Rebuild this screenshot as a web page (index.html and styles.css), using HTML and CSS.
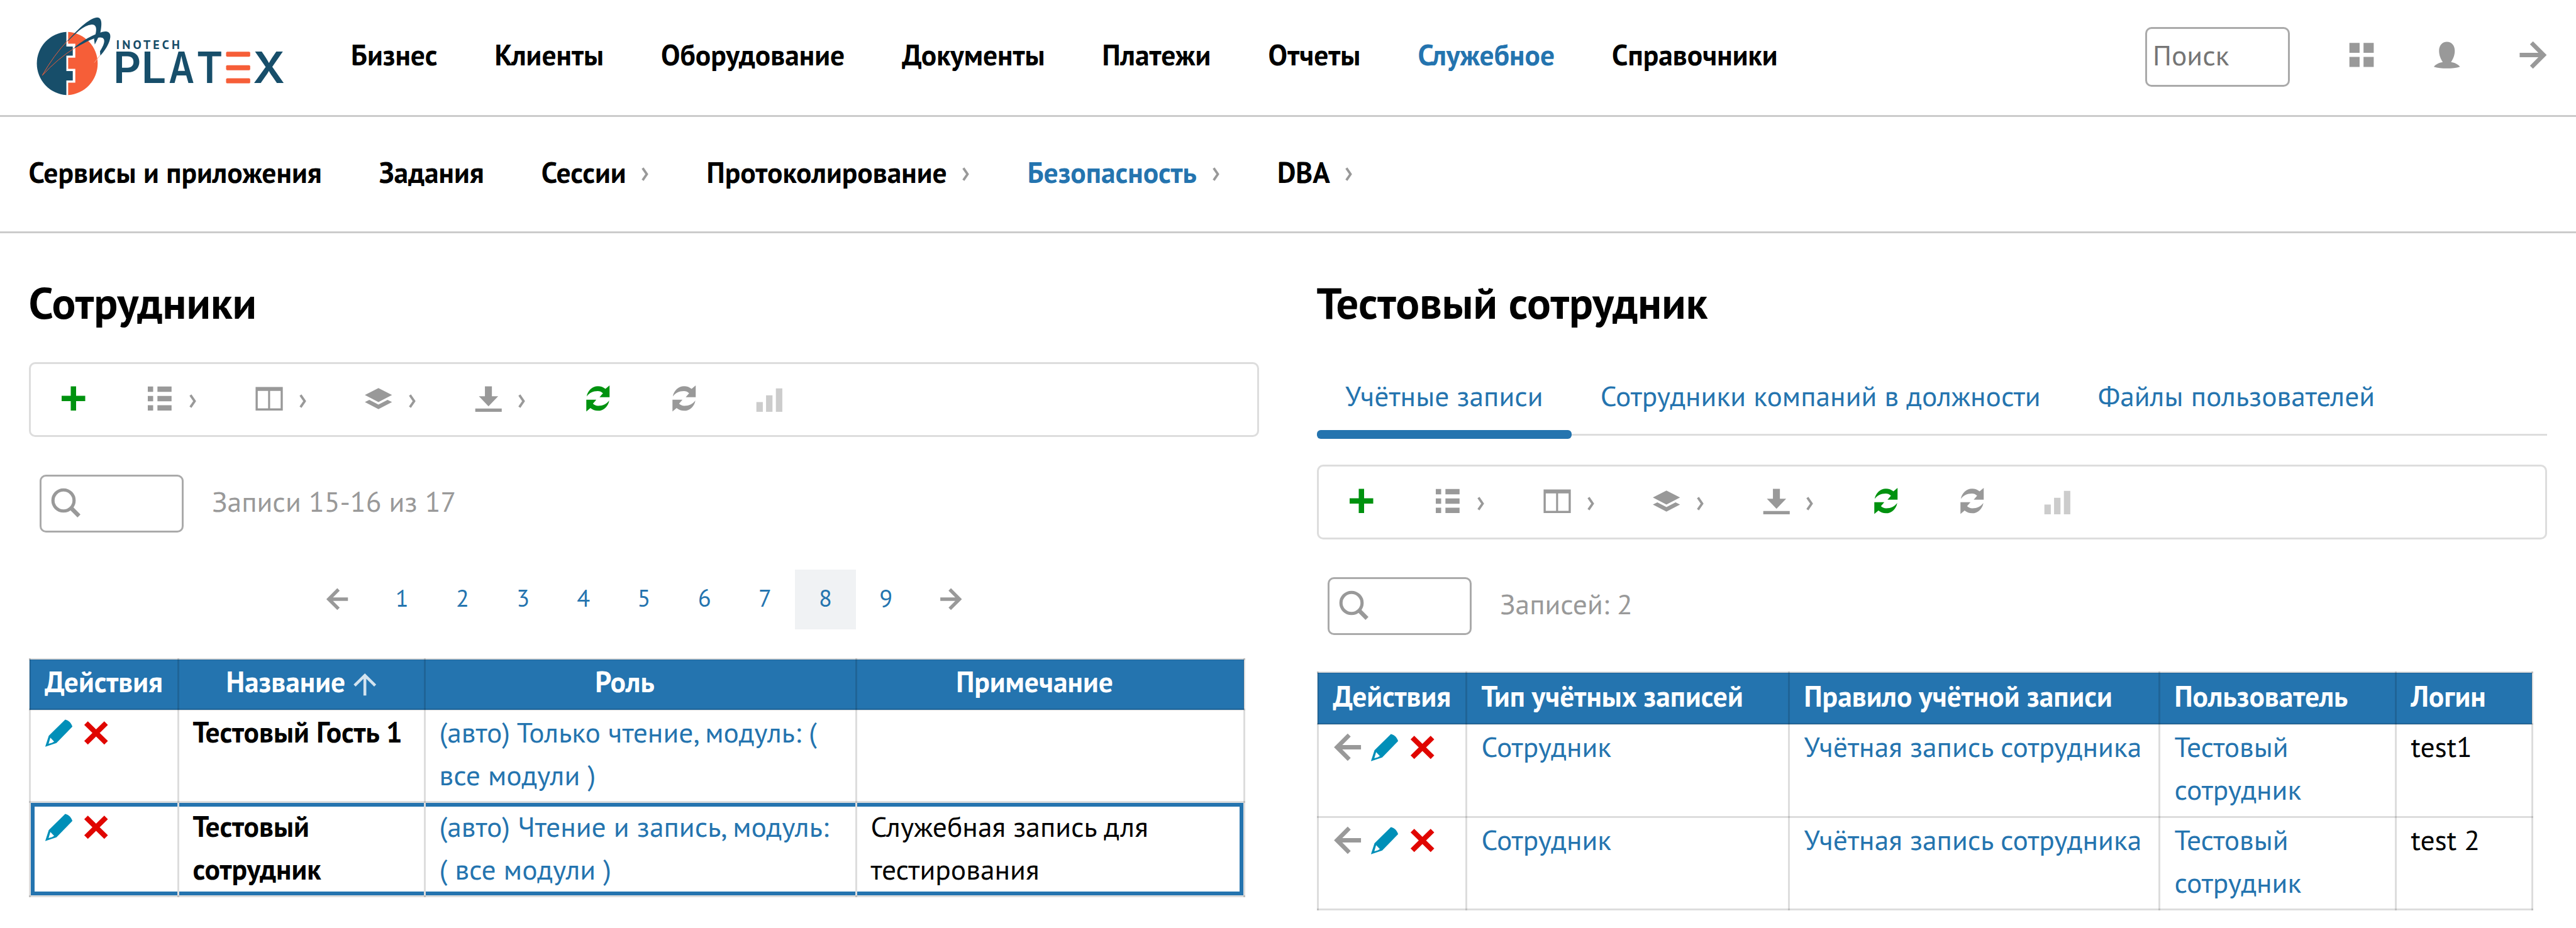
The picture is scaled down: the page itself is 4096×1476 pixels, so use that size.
FILE: index.html
```html
<!DOCTYPE html>
<html lang="ru">
<head>
<meta charset="utf-8">
<title>Сотрудники</title>
<link rel="stylesheet" href="styles.css">
</head>
<body>
<svg class="sprite" aria-hidden="true">
  <symbol id="plus" viewBox="0 0 16 16"><path d="M6.5 1.25h3v5.25h5.1v3H9.5v5.25h-3V9.5H1.4v-3h5.1z"/></symbol>
  <symbol id="list" viewBox="0 0 16 16"><path d="M1.4 1.3h3v3h-3zM6.8 1.3h7.9v3H6.8zM1.4 6.6h3v3h-3zM6.8 6.6h7.9v3H6.8zM1.4 11.8h3v3h-3zM6.8 11.8h7.9v3H6.8z"/></symbol>
  <symbol id="columns" viewBox="0 0 16 16"><path fill-rule="evenodd" d="M.5 1.6h15.2v13.2H.5zM1.7 3.8v9.7h5.8V3.8zM8.6 3.8v9.7h5.9V3.8z"/></symbol>
  <symbol id="layers" viewBox="0 0 16 16"><path d="M8 2.2l7.6 3.9L8 10 .4 6.1zM2.9 8.8L8 11.4l5.1-2.6L15.6 10 8 14 .4 10z"/></symbol>
  <symbol id="download" viewBox="0 0 16 16"><path d="M6 1.25h3.9v5.5h3.5L8 12.4 2.6 6.75H6zM.6 13.6h14.8v1.9H.6z"/></symbol>
  <symbol id="refresh" viewBox="0 0 16 16"><path id="ra" d="M1.7 6.9C2.2 3.6 4.8 1.1 8 1.1c1.6 0 3 .5 4.2 1.5L14.5.7v6.6H8.9l1.9-2.2C10 4.300 9 3.900 7.900 3.900 5.200 3.900 3 5.100 1.700 6.900z"/><use href="#ra" transform="rotate(180 8 8)"/></symbol>
  <symbol id="bars" viewBox="0 0 16 16"><path d="M.6 10h3.6v5.5H.6zM6 6.2h3.6v9.300H6zM11.500 2.400h3.600v13.100h-3.600z"/></symbol>
  <symbol id="apps" viewBox="0 0 16 16"><path d="M1.300 1.100h5.700v5.600H1.300zM9.200 1.100h5.700v5.600H9.200zM1.300 9h5.700v5.600H1.300zM9.200 9h5.700v5.600H9.200z"/></symbol>
  <symbol id="user" viewBox="0 0 16 16"><path d="M8 .5c2.600 0 4.400 2 4.400 5 0 2.600-1 4.600-2.100 6.400 2.200.4 4 1.300 5 2.600-2 .7-4.600.9-7.300.9s-5.300-.2-7.300-.9c1-1.300 2.800-2.200 5-2.600C4.600 10.100 3.600 8.100 3.600 5.500c0-3 1.800-5 4.400-5z"/></symbol>
  <symbol id="arrow" viewBox="0 0 16 16"><path fill="none" stroke="currentColor" stroke-width="2.400" d="M.5 7.900h13.200M7.100 1.100l6.800 6.800-6.800 6.800"/></symbol>
  <symbol id="arrow-thin" viewBox="0 0 16 16"><path fill="none" stroke="currentColor" stroke-width="2" d="M0 8h14.500M7 .8L14.200 8 7 15.200"/></symbol>
  <symbol id="chevron" viewBox="0 0 4 8"><path fill="none" stroke="currentColor" stroke-width="1.400" d="M.6.500L3 4 .6 7.500"/></symbol>
  <symbol id="search" viewBox="0 0 16 16"><circle cx="7" cy="7" r="5.600" fill="none" stroke="currentColor" stroke-width="1.700"/><path fill="none" stroke="currentColor" stroke-width="2.200" d="M10.900 10.900l4.300 4.300"/></symbol>
  <symbol id="pencil" viewBox="0 0 16 16"><path fill-rule="evenodd" d="M11.500.5c2 .5 3.500 2 4 4L6.600 13.600.3 15.700l2-6.100zM3.200 10.600l-1 3.500 1.900-.6 1.200-.7z"/></symbol>
  <symbol id="cross" viewBox="0 0 16 16"><path fill="none" stroke="currentColor" stroke-width="2.900" d="M2.400 2.500l11.200 11M13.600 2.500l-11.200 11"/></symbol>
</svg>

<header class="header">
  <a class="logo" href="#" aria-label="Inotech Platex">
    <svg viewBox="0 0 1710 600">
      <path fill="#174e6a" d="M234 155A213 213 0 0 0 234 580V482H277V418H234V315H277V253H234z"/>
      <path fill="#f65e38" d="M246 155A213 213 0 0 1 246 580V497H294V404H246V329H294V235H246z"/>
      <g fill="none" stroke="#f65e38" stroke-width="4"><path d="M72 448Q150 310 246 210"/><path d="M72 448Q175 335 292 262"/></g>
      <path fill="#174e6a" d="M244 212C300 150 385 62 440 58 478 58 472 112 462 163L440 210 425 240 420 205C436 160 447 106 405 106 345 112 300 165 244 218z"/>
      <path fill="#174e6a" d="M290 258C345 212 440 155 500 152 562 158 515 260 462 315L460 285C490 240 505 192 460 192 400 196 340 240 290 264z"/>
      <path fill="none" stroke="#fba58e" stroke-width="4" d="M461 312L422 362"/>
      <g class="logo-small"><text x="568" y="269" textLength="428">INOTECH</text></g>
      <g class="logo-big">
        <text x="549" y="500" textLength="188" lengthAdjust="spacingAndGlyphs">P</text>
        <text x="738" y="500" textLength="168" lengthAdjust="spacingAndGlyphs">L</text>
        <text x="922" y="500" textLength="172" lengthAdjust="spacingAndGlyphs">A</text>
        <text x="1107" y="500" textLength="178" lengthAdjust="spacingAndGlyphs">T</text>
        <text x="1488" y="500" textLength="214" lengthAdjust="spacingAndGlyphs">X</text>
      </g>
      <g fill="#f65e38"><rect x="1307" y="288" width="162" height="34" rx="8"/><rect x="1307" y="379" width="162" height="34" rx="8"/><rect x="1307" y="467" width="162" height="34" rx="8"/></g>
    </svg>
  </a>
  <nav class="nav">
    <a>Бизнес</a><a>Клиенты</a><a>Оборудование</a><a>Документы</a><a>Платежи</a><a>Отчеты</a><a class="active">Служебное</a><a>Справочники</a>
  </nav>
  <div class="tools">
    <div class="find">Поиск</div>
    <svg class="icon"><use href="#apps"/></svg>
    <svg class="icon"><use href="#user"/></svg>
    <svg class="icon"><use href="#arrow"/></svg>
  </div>
</header>

<nav class="nav subnav">
  <a>Сервисы и приложения</a>
  <a>Задания</a>
  <a>Сессии<svg class="chev"><use href="#chevron"/></svg></a>
  <a>Протоколирование<svg class="chev"><use href="#chevron"/></svg></a>
  <a class="active">Безопасность<svg class="chev"><use href="#chevron"/></svg></a>
  <a>DBA<svg class="chev"><use href="#chevron"/></svg></a>
</nav>

<main class="main">
  <section class="panel">
    <h1>Сотрудники</h1>
    <div class="toolbar">
      <svg class="icon green"><use href="#plus"/></svg>
      <span class="menu"><svg class="icon"><use href="#list"/></svg><svg class="chev"><use href="#chevron"/></svg></span>
      <span class="menu"><svg class="icon"><use href="#columns"/></svg><svg class="chev"><use href="#chevron"/></svg></span>
      <span class="menu"><svg class="icon"><use href="#layers"/></svg><svg class="chev"><use href="#chevron"/></svg></span>
      <span class="menu"><svg class="icon"><use href="#download"/></svg><svg class="chev"><use href="#chevron"/></svg></span>
      <svg class="icon green"><use href="#refresh"/></svg>
      <svg class="icon"><use href="#refresh"/></svg>
      <svg class="icon pale"><use href="#bars"/></svg>
    </div>
    <div class="filter">
      <div class="search"><svg class="icon"><use href="#search"/></svg></div>
      <span>Записи 15-16 из 17</span>
    </div>
    <div class="pages">
      <span class="step"><svg class="icon back"><use href="#arrow"/></svg></span>
      <a>1</a><a>2</a><a>3</a><a>4</a><a>5</a><a>6</a><a>7</a><a class="current">8</a><a>9</a>
      <span class="step"><svg class="icon"><use href="#arrow"/></svg></span>
    </div>
    <table class="grid staff">
      <colgroup><col class="s1"><col class="s2"><col class="s3"><col class="s4"></colgroup>
      <thead>
        <tr><th>Действия</th><th>Название<svg class="icon sort"><use href="#arrow-thin"/></svg></th><th class="sortable">Роль</th><th class="sortable">Примечание</th></tr>
      </thead>
      <tbody>
        <tr>
          <td><div class="actions"><svg class="icon edit"><use href="#pencil"/></svg><svg class="icon del"><use href="#cross"/></svg></div></td>
          <td><b>Тестовый Гость 1</b></td>
          <td><a>(авто) Только чтение, модуль: (<br>все модули )</a></td>
          <td></td>
        </tr>
        <tr class="selected">
          <td><div class="actions"><svg class="icon edit"><use href="#pencil"/></svg><svg class="icon del"><use href="#cross"/></svg></div></td>
          <td><b>Тестовый<br>сотрудник</b></td>
          <td><a>(авто) Чтение и запись, модуль:<br>( все модули )</a></td>
          <td>Служебная запись для<br>тестирования</td>
        </tr>
      </tbody>
    </table>
  </section>

  <section class="panel">
    <h1>Тестовый сотрудник</h1>
    <div class="tabs">
      <a class="on">Учётные записи</a><a>Сотрудники компаний в должности</a><a>Файлы пользователей</a>
    </div>
    <div class="toolbar">
      <svg class="icon green"><use href="#plus"/></svg>
      <span class="menu"><svg class="icon"><use href="#list"/></svg><svg class="chev"><use href="#chevron"/></svg></span>
      <span class="menu"><svg class="icon"><use href="#columns"/></svg><svg class="chev"><use href="#chevron"/></svg></span>
      <span class="menu"><svg class="icon"><use href="#layers"/></svg><svg class="chev"><use href="#chevron"/></svg></span>
      <span class="menu"><svg class="icon"><use href="#download"/></svg><svg class="chev"><use href="#chevron"/></svg></span>
      <svg class="icon green"><use href="#refresh"/></svg>
      <svg class="icon"><use href="#refresh"/></svg>
      <svg class="icon pale"><use href="#bars"/></svg>
    </div>
    <div class="filter">
      <div class="search"><svg class="icon"><use href="#search"/></svg></div>
      <span>Записей: 2</span>
    </div>
    <table class="grid accounts">
      <colgroup><col class="a1"><col class="a2"><col class="a3"><col class="a4"><col class="a5"></colgroup>
      <thead>
        <tr><th>Действия</th><th>Тип учётных записей</th><th>Правило учётной записи</th><th>Пользователь</th><th>Логин</th></tr>
      </thead>
      <tbody>
        <tr>
          <td><div class="actions"><svg class="icon back"><use href="#arrow"/></svg><svg class="icon edit"><use href="#pencil"/></svg><svg class="icon del"><use href="#cross"/></svg></div></td>
          <td><a>Сотрудник</a></td><td><a>Учётная запись сотрудника</a></td><td><a>Тестовый<br>сотрудник</a></td><td>test1</td>
        </tr>
        <tr>
          <td><div class="actions"><svg class="icon back"><use href="#arrow"/></svg><svg class="icon edit"><use href="#pencil"/></svg><svg class="icon del"><use href="#cross"/></svg></div></td>
          <td><a>Сотрудник</a></td><td><a>Учётная запись сотрудника</a></td><td><a>Тестовый<br>сотрудник</a></td><td>test 2</td>
        </tr>
      </tbody>
    </table>
  </section>
</main>
</body>
</html>
```
FILE: styles.css
```css
* { box-sizing: border-box; }
html { font-size: 45.511px; }
body {
  margin: 0;
  width: 4096px;
  height: 1476px;
  overflow: hidden;
  background: #fff;
  color: #000;
  font: 1rem/1.5 "PT Sans", "Noto Sans", sans-serif;
}
a { color: #2474af; }
.sprite { position: absolute; width: 0; height: 0; }
.icon { width: 1rem; height: 1rem; flex: none; fill: currentColor; color: #999; overflow: visible; }
.chev { width: 11.4px; height: 22px; flex: none; color: #999; overflow: visible; }
.back { transform: scaleX(-1); }
.green { color: #00920f; }
.pale { color: #ccc; }

.header {
  display: flex;
  height: 186px;
  padding-right: 1rem;
  border-bottom: 3px solid #cbcbcb;
}
.logo { width: 405px; margin: 14px 103px 0 50px; }
.logo svg { display: block; width: 405px; height: 142px; }
.logo-small { fill: #174e6a; font: 700 84px "PT Sans", sans-serif; }
.logo-big { fill: #174e6a; font: 600 290px Inter, sans-serif; }

.nav { display: flex; gap: 2rem; font-weight: 700; white-space: nowrap; }
.nav a { color: #000; display: flex; align-items: center; height: 68px; }
.nav .active { color: #2474af; }
.nav .chev { margin: 3px 1px 0 24.6px; }
.header .nav { padding-top: 54px; }
.subnav { height: 185px; padding: 55px 1rem 0; border-bottom: 3px solid #cbcbcb; }

.tools { display: flex; gap: 2rem; margin-left: auto; padding-top: 43px; }
.tools .icon { margin-top: 22px; }
.find {
  width: 230px;
  height: 95px;
  padding: 8px 9px;
  border: 3px solid #aaa;
  border-radius: 10px;
  color: #757575;
}

.main { display: flex; gap: 2rem; padding: 67px 1rem 0; }
.panel { width: 1957px; }
h1 { margin: 0; font-size: 70.6px; line-height: 85px; }
.panel > h1 + .toolbar { margin-top: 53px; }

.tabs { display: flex; height: 170px; padding-top: 73px; margin-bottom: 46px; border-bottom: 3px solid #ddd; }
.tabs a { position: relative; padding: 0 1rem; }
.tabs .on::after {
  content: "";
  position: absolute;
  left: 0;
  right: 0;
  bottom: -8px;
  height: 14px;
  border-radius: 6px;
  background: #2474af;
}

.toolbar {
  display: flex;
  align-items: center;
  gap: 2rem;
  height: 119px;
  padding: 0 0 4px 1rem;
  border: 3px solid #ddd;
  border-radius: 10px;
}
.menu { display: flex; align-items: center; }
.menu .chev { margin: 9px 1.3px 0 25.200px; }

.filter { display: flex; align-items: center; gap: 1rem; margin: 60px 0 0 17px; color: #999; }
.filter span { padding-bottom: 5px; }
.search { display: flex; align-items: center; width: 229px; height: 92px; padding: 0 0 4px 14px; border: 3px solid #aaa; border-radius: 10px; }
.search .icon { width: 48px; height: 48px; }

.pages { display: flex; justify-content: center; height: 95px; margin-top: 59px; font-size: 38.4px; }
.pages a { width: 96.200px; height: 95px; line-height: 91px; text-align: center; }
.pages .current { background: #f0f2f4; }
.step { display: flex; align-items: center; justify-content: center; width: 110px; }
.step .icon { width: 36.400px; height: 36.400px; }

.grid { border-collapse: collapse; table-layout: fixed; }
.grid th, .grid td { padding: 1px 21px 6px 22px; border: 3px solid rgba(0, 0, 0, .133); vertical-align: top; text-align: left; white-space: nowrap; }
.grid th { background: #2474af; color: #fff; padding: 1px 0 7px; }
.staff { width: 1934px; margin-top: 46px; }
.staff th { text-align: center; height: 80px; }
.staff .sortable { padding-right: 49px; }
.staff tbody tr { height: 147px; }
.staff tbody .selected { height: 150px; }
.staff .selected td { padding-top: 4px; box-shadow: inset 0 6px #2474af, inset 0 -6px #2474af; }
.staff .selected td:first-child { box-shadow: inset 6px 0 #2474af, inset 0 6px #2474af, inset 0 -6px #2474af; }
.staff .selected td:last-child { box-shadow: inset -6px 0 #2474af, inset 0 6px #2474af, inset 0 -6px #2474af; }
.s1 { width: 236px; } .s2 { width: 392px; } .s3 { width: 686px; } .s4 { width: 617px; }
.sort { width: 36.400px; height: 36.400px; margin-left: 13px; color: #d3e3ef; vertical-align: -5px; transform: rotate(-90deg); }
.accounts { width: 1934px; margin-top: 58px; }
.accounts th, .accounts td { padding-left: 23px; }
.accounts th { padding-top: 3px; height: 82px; }
.accounts tbody tr { height: 147.500px; }
.a1 { width: 236px; } .a2 { width: 513px; } .a3 { width: 589px; } .a4 { width: 376px; } .a5 { width: 217px; }

.actions { display: flex; gap: 14.300px; padding-top: 12px; }
.edit { color: #008fb8; }
.del { color: #e00600; }
```
